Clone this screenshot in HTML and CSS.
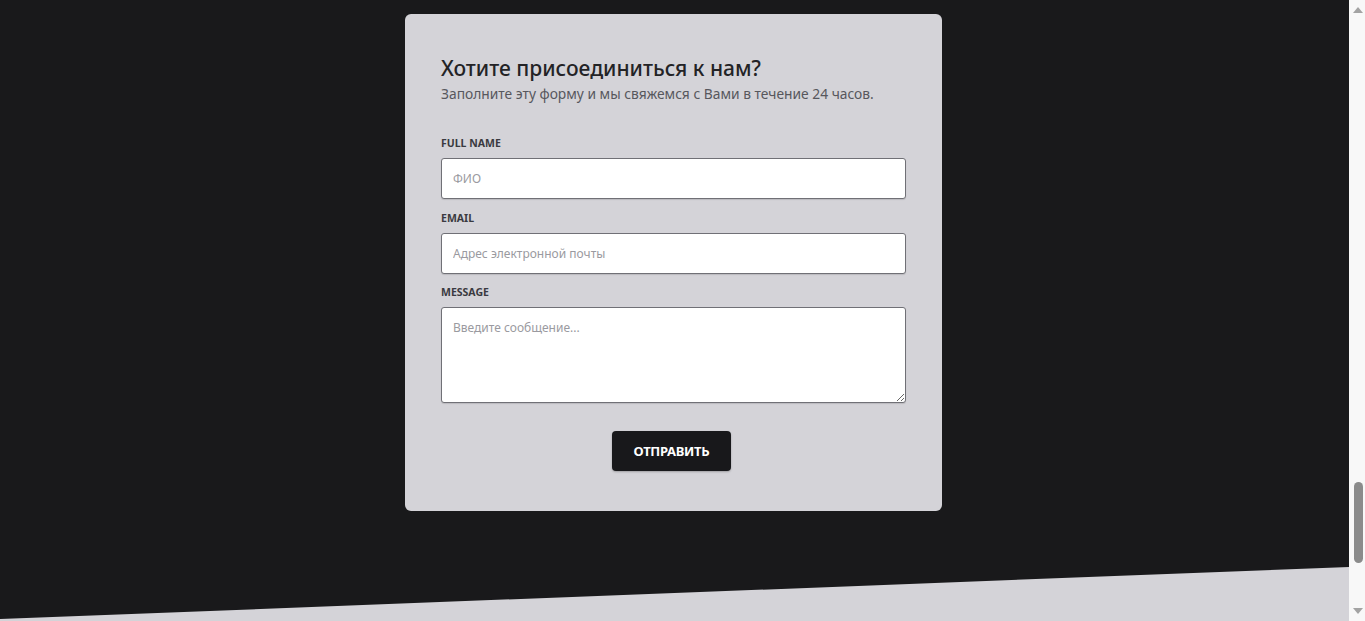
FILE: index.html
```html
<!DOCTYPE html>
<html lang="ru">
<head>
<meta charset="utf-8">
<title>Присоединиться</title>
<link rel="stylesheet" href="styles.css">
</head>
<body>
<div class="viewport">
  <main class="page">
    <section class="join">
      <form class="card">
        <h2 class="card-title">Хотите присоединиться к нам?</h2>
        <p class="card-sub">Заполните эту форму и мы свяжемся с Вами в течение 24 часов.</p>
        <div class="fields">
          <div class="field">
            <label class="label" for="name">Full name</label>
            <input class="input" id="name" type="text" placeholder="ФИО">
          </div>
          <div class="field">
            <label class="label" for="email">Email</label>
            <input class="input" id="email" type="email" placeholder="Адрес электронной почты">
          </div>
          <div class="field">
            <label class="label" for="msg">Message</label>
            <textarea class="input textarea" id="msg" placeholder="Введите сообщение..."></textarea>
          </div>
        </div>
        <div class="actions">
          <button class="btn" type="button">Отправить</button>
        </div>
      </form>
    </section>
    <div class="slant"></div>
  </main>
  <div class="scrollbar" aria-hidden="true">
    <span class="sb-arrow sb-up"></span>
    <div class="sb-track"><span class="sb-thumb"></span></div>
    <span class="sb-arrow sb-down"></span>
  </div>
</div>
</body>
</html>
```

FILE: styles.css
```css
* { box-sizing: border-box; }
html, body { margin: 0; padding: 0; height: 100%; overflow: hidden; }
body {
  font-family: "Noto Sans", "Open Sans", "Liberation Sans", sans-serif;
  background: #19191b;
}
.viewport {
  display: flex;
  height: 621px;
}
.page {
  flex: 1;
  display: flex;
  flex-direction: column;
  background: #19191b;
}
.join {
  flex: 1;
  display: flex;
  justify-content: center;
  padding-top: 14px;
  padding-right: 2px;
}
.card {
  width: 537px;
  height: 497px;
  background: #d4d3d8;
  border-radius: 6px;
  padding: 39px 36px 40px 36px;
  display: flex;
  flex-direction: column;
}
.card-title {
  margin: 0;
  font-size: 21px;
  line-height: 30px;
  font-weight: 500;
  color: #232326;
}
.card-sub {
  margin: 0;
  font-size: 13.8px;
  line-height: 22px;
  color: #57575d;
}
.fields {
  margin-top: 30px;
  display: flex;
  flex-direction: column;
  gap: 10.5px;
}
.field { display: flex; flex-direction: column; }
.label {
  font-size: 10.5px;
  line-height: 16px;
  font-weight: 700;
  text-transform: uppercase;
  color: #3a3a40;
  margin-bottom: 7px;
}
.input {
  height: 41px;
  width: 100%;
  border: 1px solid #707076;
  border-radius: 3px;
  background: #fff;
  padding: 0 11px;
  font-family: inherit;
  font-size: 12px;
  color: #222;
  box-shadow: 0 1px 1px rgba(0,0,0,0.12);
  outline: none;
}
.input::placeholder { color: #9a9aa0; }
.textarea {
  height: 96px;
  padding: 11px 11px;
  resize: vertical;
  display: block;
}
.actions {
  display: flex;
  justify-content: center;
  margin-top: 28px;
  padding-right: 4px;
}
.btn {
  width: 119px;
  height: 40px;
  background: #18181b;
  color: #fff;
  border: none;
  border-radius: 4px;
  font-family: inherit;
  font-size: 13px;
  font-weight: 700;
  letter-spacing: -0.3px;
  text-transform: uppercase;
  box-shadow: 0 1px 2px rgba(0,0,0,0.25);
}
.slant {
  height: 54px;
  background: #d4d3d8;
  clip-path: polygon(0 52px, 100% 0, 100% 100%, 0 100%);
}
.scrollbar {
  width: 16px;
  background: #f8f8f8;
  display: flex;
  flex-direction: column;
  align-items: center;
}
.sb-arrow {
  width: 0;
  height: 0;
  border-left: 5px solid transparent;
  border-right: 5px solid transparent;
  margin-left: 1px;
}
.sb-up { border-bottom: 6px solid #a3a3a3; margin-top: 7px; }
.sb-down { border-top: 6px solid #a3a3a3; margin-bottom: 7px; }
.sb-track {
  flex: 1;
  width: 100%;
  display: flex;
  flex-direction: column;
  justify-content: flex-end;
  align-items: center;
  padding-bottom: 45px;
}
.sb-thumb {
  width: 9px;
  height: 81px;
  margin-left: 2px;
  border-radius: 5px;
  background: #8b8b8b;
}
```
